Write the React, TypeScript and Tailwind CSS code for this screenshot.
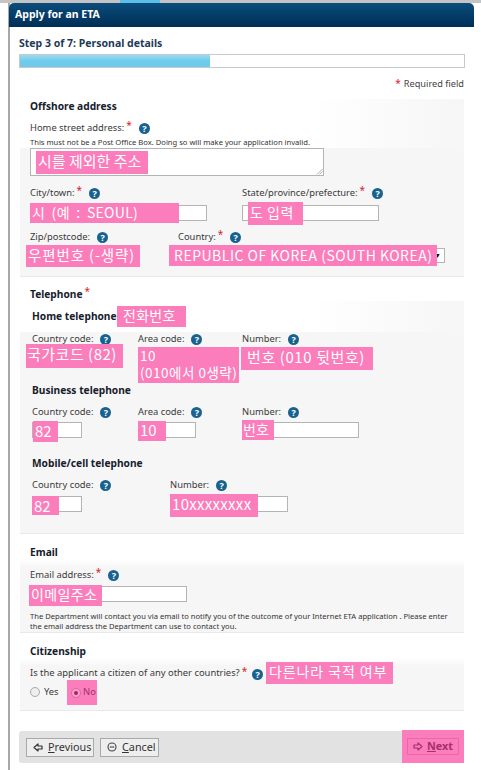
import React from "react";

const KO = '"Noto Sans CJK KR", sans-serif';

function Help({ className = "" }: { className?: string }) {
  return (
    <span className={`relative top-[1px] inline-flex h-[11px] w-[11px] shrink-0 items-center justify-center rounded-full bg-[#17628f] text-[9px] font-bold leading-none text-white ${className}`}>?</span>
  );
}

function Label({ text, req, className = "" }: { text: string; req?: boolean; className?: string }) {
  return (
    <div className={`flex h-[13px] items-center whitespace-nowrap text-[9.4px] leading-[13px] text-[#3a3a3a] ${className}`}>
      <span>{text}</span>
      {req && <span className="relative -top-[2px] ml-[2px] text-[10px] text-[#d8212a]">*</span>}
      <Help className="ml-[7px]" />
    </div>
  );
}

function Box({ w, h = "h-[16px]" }: { w: string; h?: string }) {
  return <div className={`${w} ${h} border border-[#b4b4b4] bg-white`} />;
}

function Pink({ children, className = "" }: { children: React.ReactNode; className?: string }) {
  return (
    <div style={{ fontFamily: KO }} className={`absolute whitespace-nowrap bg-[#fb7dbb] font-normal text-white ${className}`}>
      {children}
    </div>
  );
}

function Section({ children, className = "" }: { children: React.ReactNode; className?: string }) {
  return <div className={`ml-[1px] w-[444px] border-b border-[#e9e9e9] bg-[#f6f6f6] ${className}`}>{children}</div>;
}

function Fade({ children, className = "" }: { children?: React.ReactNode; className?: string }) {
  return <div className={`bg-gradient-to-b from-white to-[#f6f6f6] ${className}`}>{children}</div>;
}

function Title({ children, className = "" }: { children: React.ReactNode; className?: string }) {
  return <div className={`text-[10.2px] font-bold leading-[14px] text-[#15202b] ${className}`}>{children}</div>;
}

function Btn({ icon, under, rest, className = "" }: { icon: React.ReactNode; under: string; rest: string; className?: string }) {
  return (
    <div className={`flex h-[19px] items-center border border-[#a9a9a9] bg-[#eeeeee] pl-[6px] text-[10.8px] text-[#333] ${className}`}>
      {icon}
      <span className="ml-[5px]"><span className="underline">{under}</span>{rest}</span>
    </div>
  );
}

function ArrowIcon({ dir, color }: { dir: "l" | "r"; color: string }) {
  return (
    <svg width="10" height="9" viewBox="0 0 10 9" className={dir === "l" ? "" : "-scale-x-100"}>
      <path d="M1 4.5 L5 1 V3 H9 V6 H5 V8 Z" fill="none" stroke={color} strokeWidth="1.2" strokeLinejoin="round" />
    </svg>
  );
}

function CancelIcon() {
  return (
    <svg width="10" height="10" viewBox="0 0 10 10">
      <circle cx="5" cy="5" r="4" fill="none" stroke="#444" strokeWidth="1.1" />
      <path d="M2.8 5 H7.2" stroke="#444" strokeWidth="1.1" />
    </svg>
  );
}

export default function App() {
  return (
    <div className="h-[770px] w-[481px] overflow-hidden bg-white" style={{ fontFamily: '"Noto Sans", sans-serif' }}>
      <div className="flex h-[3px] bg-[#c4c4c4]">
        <div className="ml-[120px] w-[40px] bg-[#5cc0e6]" />
      </div>
      <div className="ml-[8px] h-[767px] w-[466px] border-l-2 border-[#a8a8a8]">
        <div className="-ml-[1px] flex h-[24px] items-center rounded-t-[5px] bg-gradient-to-b from-[#0b4c7c] to-[#002f55] pl-[6px] text-[10.5px] font-bold text-white">
          Apply for an ETA
        </div>
        <div className="pl-[9px]">
          <div className="mt-[9px] text-[10.5px] font-bold leading-[14px] text-[#1d3a57]">Step 3 of 7: Personal details</div>
          <div className="mt-[4px] h-[14px] w-[446px] border border-[#c9c9c9] bg-white">
            <div className="h-full w-[190px] bg-gradient-to-b from-[#9adcf2] via-[#6fcbec] to-[#6fcbec]" />
          </div>
          <div className="mt-[9px] flex w-[445px] justify-end text-[9.2px] leading-[13px] text-[#444]">
            <span className="mr-[3px] text-[10px] text-[#d8212a]">*</span>Required field
          </div>

          {/* Offshore */}
          <Section className="mt-[9px] h-[178px]">
            <div className="bg-gradient-to-r from-white via-white via-[65%] to-[#f6f6f6] pl-[10px]">
              <Title>Offshore address</Title>
              <Label text="Home street address:" req className="mt-[8px]" />
              <div className="mt-[3px] text-[7.6px] leading-[11px] text-[#333]">This must not be a Post Office Box. Doing so will make your application invalid.</div>
            </div>
            <div className="pl-[10px]">
              <div className="relative">
                <Box w="w-[294px]" h="h-[28px]" />
                <Pink className="left-[6px] top-[3px] h-[23px] w-[112px] pl-[2px] text-[15px] leading-[20px]">시를 제외한 주소</Pink>
                <svg width="7" height="7" viewBox="0 0 7 7" className="absolute bottom-[1px] left-[286px]">
                  <path d="M1 6.5 L6.5 1 M3.5 6.5 L6.5 3.5" stroke="#999" strokeWidth="0.8" />
                </svg>
              </div>
              <div className="mt-[10px] flex">
                <div className="w-[212px]">
                  <Label text="City/town:" req />
                  <div className="relative mt-[6px]">
                    <Box w="w-[177px]" />
                    <Pink className="-top-[2px] left-0 h-[20px] w-[149px] pl-[2px] text-[14px] leading-[19px] tracking-[0.3px] [word-spacing:3px]">시 (예 : SEOUL)</Pink>
                  </div>
                </div>
                <div>
                  <Label text="State/province/prefecture:" req />
                  <div className="relative mt-[6px]">
                    <Box w="w-[137px]" />
                    <Pink className="-top-[3px] left-[6px] h-[23px] w-[55px] pl-[2px] text-[14px] leading-[20px] tracking-[0.5px]">도 입력</Pink>
                  </div>
                </div>
              </div>
              <div className="mt-[9px] flex">
                <div className="w-[148px]">
                  <Label text="Zip/postcode:" />
                  <div className="relative mt-[5px]">
                    <Box w="w-[66px]" h="h-[15px]" />
                    <Pink className="-left-[4px] -top-[3px] h-[22px] w-[114px] pl-[2px] text-[14.5px] leading-[20px] tracking-[0.9px]">우편번호 (-생략)</Pink>
                  </div>
                </div>
                <div>
                  <Label text="Country:" req />
                  <div className="relative mt-[5px]">
                    <div className="flex h-[15px] w-[267px] items-center justify-end border border-[#b4b4b4] bg-white pr-[3px] text-[7px] leading-none">▼</div>
                    <Pink className="-left-[9px] -top-[3px] h-[21px] w-[268px] pl-[5px] text-[14px] leading-[20px] tracking-[0.5px]">REPUBLIC OF KOREA (SOUTH KOREA)</Pink>
                  </div>
                </div>
              </div>
            </div>
          </Section>

          {/* Telephone */}
          <div className="ml-[1px] mt-[10px] flex h-[14px] items-center pl-[10px]">
            <Title>Telephone</Title>
            <span className="relative -top-[3px] ml-[2px] text-[10px] text-[#d8212a]">*</span>
          </div>
          <Section className="h-[233px]">
            <div className="relative h-[31px] bg-gradient-to-r from-white via-white via-[65%] to-[#f6f6f6] pl-[12px] pt-[8px]">
              <Title>Home telephone</Title>
              <Pink className="left-[97px] top-[5px] h-[21px] w-[69px] pl-[6px] text-[14px] leading-[19px] tracking-[0.3px]">전화번호</Pink>
            </div>
            <div className="flex pl-[12px]">
              <div className="w-[106px]">
                <Label text="Country code:" />
                <div className="relative mt-[4px]">
                  <Box w="w-[50px]" />
                  <Pink className="-left-[6px] -top-[5px] h-[24px] w-[97px] pl-[1px] text-[15px] leading-[19px] tracking-[0.5px]">국가코드 (82)</Pink>
                </div>
              </div>
              <div className="w-[104px]">
                <Label text="Area code:" />
                <div className="relative mt-[4px]">
                  <Box w="w-[58px]" />
                  <Pink className="-top-[2px] left-0 h-[36px] w-[101px] pl-[2px] text-[13.5px] leading-[17px] tracking-[0.5px]">10<br />(010에서 0생략)</Pink>
                </div>
              </div>
              <div>
                <Label text="Number:" />
                <div className="relative mt-[4px]">
                  <Box w="w-[117px]" />
                  <Pink className="-left-[1px] -top-[2px] h-[23px] w-[132px] pl-[6px] text-[15px] leading-[20px] tracking-[0.6px]">번호 (010 뒷번호)</Pink>
                </div>
              </div>
            </div>
            <Title className="ml-[12px] mt-[18px]">Business telephone</Title>
            <div className="mt-[8px] flex pl-[12px]">
              <div className="w-[106px]">
                <Label text="Country code:" />
                <div className="relative mt-[4px]">
                  <Box w="w-[50px]" />
                  <Pink className="-top-px left-[1px] h-[21px] w-[25px] pl-[2px] text-[15px] leading-[19px]">82</Pink>
                </div>
              </div>
              <div className="w-[104px]">
                <Label text="Area code:" />
                <div className="relative mt-[4px]">
                  <Box w="w-[58px]" />
                  <Pink className="-top-px left-0 h-[20px] w-[28px] pl-[2px] text-[15px] leading-[18px]">10</Pink>
                </div>
              </div>
              <div>
                <Label text="Number:" />
                <div className="relative mt-[4px]">
                  <Box w="w-[117px]" />
                  <Pink className="-top-[2px] left-0 h-[20px] w-[32px] pl-[1px] text-[14px] leading-[18px]">번호</Pink>
                </div>
              </div>
            </div>
            <Title className="ml-[12px] mt-[18px]">Mobile/cell telephone</Title>
            <div className="mt-[8px] flex pl-[12px]">
              <div className="w-[138px]">
                <Label text="Country code:" />
                <div className="relative mt-[5px]">
                  <Box w="w-[50px]" />
                  <Pink className="left-0 top-0 h-[19px] w-[27px] pl-[2px] text-[15px] leading-[19px]">82</Pink>
                </div>
              </div>
              <div>
                <Label text="Number:" />
                <div className="relative mt-[5px]">
                  <Box w="w-[118px]" />
                  <Pink className="-top-[2px] left-0 h-[23px] w-[88px] pl-[2px] text-[15px] leading-[20px] tracking-[0.3px]">10xxxxxxxx</Pink>
                </div>
              </div>
            </div>
          </Section>

          {/* Email */}
          <Title className="ml-[11px] mt-[11px]">Email</Title>
          <Section className="h-[74px]">
            <Fade className="h-[9px]" />
            <div className="pl-[10px]">
              <Label text="Email address:" req />
              <div className="relative mt-[5px]">
                <Box w="w-[157px]" />
                <Pink className="-left-px -top-px h-[21px] w-[73px] pl-[2px] text-[14px] leading-[19px] tracking-[0.4px]">이메일주소</Pink>
              </div>
              <div className="mt-[9px] w-[425px] text-[7.6px] leading-[10px] text-[#333]">
                The Department will contact you via email to notify you of the outcome of your Internet ETA application . Please enter the email address the Department can use to contact you.
              </div>
            </div>
          </Section>

          {/* Citizenship */}
          <Title className="ml-[11px] mt-[11px]">Citizenship</Title>
          <Section className="h-[53px]">
            <Fade className="h-[8px]" />
            <div className="relative pl-[10px]">
              <div className="flex h-[14px] items-center whitespace-nowrap text-[9.4px] text-[#3a3a3a]">
                <span>Is the applicant a citizen of any other countries?</span>
                <span className="relative -top-[2px] ml-[2px] text-[10px] text-[#d8212a]">*</span>
                <Help className="ml-[5px]" />
              </div>
              <Pink className="left-[246px] -top-[4px] h-[22px] w-[127px] pl-[3px] text-[14px] leading-[19px] tracking-[0.9px]">다른나라 국적 여부</Pink>
              <div className="mt-[4px] flex h-[16px] items-center text-[9.4px] text-[#3a3a3a]">
                <span className="h-[10px] w-[10px] rounded-full border border-[#aaa] bg-[#eee]" />
                <span className="ml-[4px]">Yes</span>
              </div>
              <div className="absolute left-[47px] top-[14px] flex h-[25px] w-[30px] items-center bg-[#fb7dbb] pl-[4px] text-[9.4px] text-[#a5306c]">
                <span className="flex h-[10px] w-[10px] items-center justify-center rounded-full border border-[#d86aa0] bg-[#fba0cc]">
                  <span className="h-[4px] w-[4px] rounded-full bg-[#b01e62]" />
                </span>
                <span className="ml-[2px]">No</span>
              </div>
            </div>
          </Section>

          {/* Footer */}
          <div className="relative mt-[20px] flex h-[32px] w-[445px] items-center rounded-[3px] bg-[#e2e2e2] pl-[7px]">
            <Btn icon={<ArrowIcon dir="l" color="#333" />} under="P" rest="revious" className="w-[68px]" />
            <Btn icon={<CancelIcon />} under="C" rest="ancel" className="ml-[6px] w-[59px]" />
            <div className="absolute -top-px right-0 flex h-[33px] w-[62px] items-center justify-center bg-[#fb7dbb]">
              <div className="flex h-[17px] w-[52px] items-center justify-center border border-[#e76aa6] text-[10.8px] font-bold text-[#a5306c]">
                <ArrowIcon dir="r" color="#a5306c" />
                <span className="ml-[4px] underline">N</span>ext
              </div>
            </div>
          </div>
        </div>
      </div>
    </div>
  );
}
